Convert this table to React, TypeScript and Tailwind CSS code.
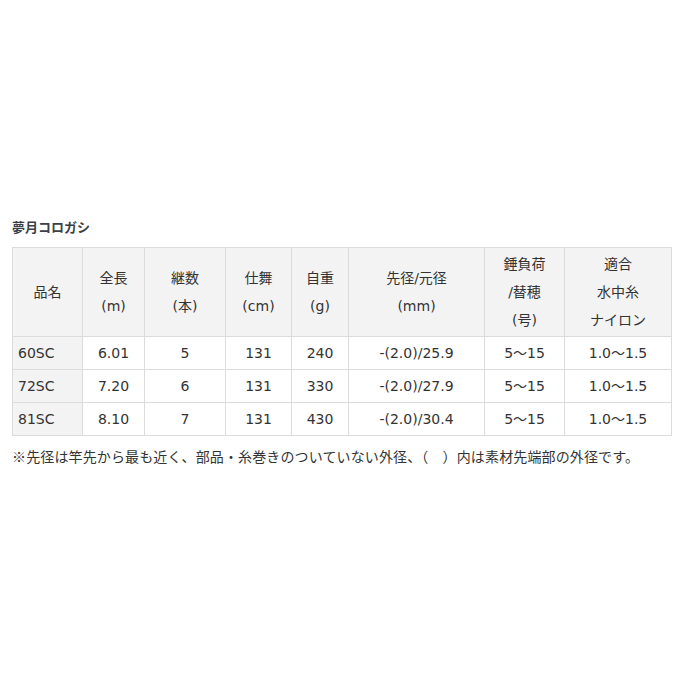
const FONT = "font-['DejaVu_Sans','Noto_Sans_CJK_JP',sans-serif]";

const rows = [
  ["60SC", "6.01", "5", "131", "240", "-(2.0)/25.9", "5～15", "1.0～1.5"],
  ["72SC", "7.20", "6", "131", "330", "-(2.0)/27.9", "5～15", "1.0～1.5"],
  ["81SC", "8.10", "7", "131", "430", "-(2.0)/30.4", "5～15", "1.0～1.5"],
];

const headers: string[][] = [
  ["品名"],
  ["全長", "(m)"],
  ["継数", "(本)"],
  ["仕舞", "(cm)"],
  ["自重", "(g)"],
  ["先径/元径", "(mm)"],
  ["錘負荷", "/替穂", "(号)"],
  ["適合", "水中糸", "ナイロン"],
];

const widths = [70, 62, 81, 66, 57, 136, 80, 107];

export default function App() {
  return (
    <div className={`w-[673px] h-[673px] bg-white pt-[217px] pl-3 text-[#333] ${FONT}`}>
      {/* title */}
      <h2 className="text-[13px] leading-[20px] font-bold text-[#3a3f48] font-['Noto_Sans_CJK_JP',sans-serif]">
        夢月コロガシ
      </h2>

      <table className="mt-[10px] w-[659px] table-fixed border-collapse text-[14px]">
        <colgroup>
          {widths.map((w, i) => (
            <col key={i} style={{ width: w }} />
          ))}
        </colgroup>
        <thead>
          <tr>
            {headers.map((lines, i) => (
              <th
                key={i}
                className="border border-[#dcdcdc] bg-[#f3f3f3] py-[2px] font-normal leading-[28px] text-center align-middle"
              >
                {lines.map((l, j) => (
                  <div key={j}>{l}</div>
                ))}
              </th>
            ))}
          </tr>
        </thead>
        <tbody>
          {rows.map((r, i) => (
            <tr key={i}>
              {r.map((c, j) => (
                <td
                  key={j}
                  className={
                    j === 0
                      ? "border border-[#dcdcdc] bg-[#f3f3f3] py-[2px] pl-[5px] leading-[28px] text-left"
                      : "border border-[#dcdcdc] py-[2px] leading-[28px] text-center"
                  }
                >
                  {c}
                </td>
              ))}
            </tr>
          ))}
        </tbody>
      </table>

      {/* note */}
      <p className="mt-[6px] text-[14px] leading-[28px] tracking-[0.13px] font-['Noto_Sans_CJK_JP',sans-serif]">
        ※先径は竿先から最も近く、部品・糸巻きのついていない外径、（　）内は素材先端部の外径です。
      </p>
    </div>
  );
}
